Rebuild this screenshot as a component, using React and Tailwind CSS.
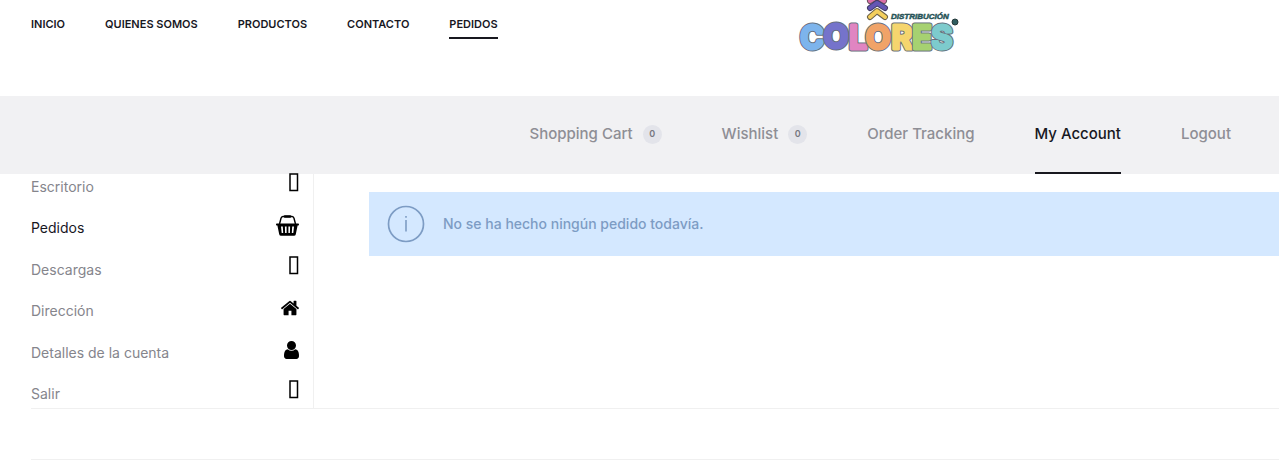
import React from "react";

const mainLinks = ["Inicio", "Quienes somos", "Productos", "Contacto", "Pedidos"];

const accountTabs = [
    { label: "Shopping Cart", count: 0 },
    { label: "Wishlist", count: 0 },
    { label: "Order Tracking" },
    { label: "My Account" },
    { label: "Logout" },
];

const logoLetters = [
    { char: "C", x: 14, y: 49, color: "#7db4ec" },
    { char: "O", x: 38, y: 48, color: "#7573cb" },
    { char: "L", x: 60, y: 49, color: "#e085c2" },
    { char: "O", x: 80, y: 49, color: "#f0a368" },
    { char: "R", x: 104, y: 49, color: "#f5d56e" },
    { char: "E", x: 124, y: 49, color: "#a6d171" },
    { char: "S", x: 144, y: 49, color: "#7dcbcd" },
];

const Logo = () => (
    <svg width="164" height="64" viewBox="0 0 164 64" role="img" aria-label="Distribución Colores">
        <g fill="none" strokeLinecap="round" strokeLinejoin="round">
            <path d="M72 1l7-4 7 4" stroke="#6b5261" strokeWidth="6" />
            <path d="M72 1l7-4 7 4" stroke="#dc6fa8" strokeWidth="4" />
            <path d="M72 8l7-5 8 5" stroke="#3f3a63" strokeWidth="6" />
            <path d="M72 8l7-5 8 5" stroke="#6456b4" strokeWidth="4" />
            <path d="M72 17l7-6 8 6" stroke="#6d6248" strokeWidth="6" />
            <path d="M72 17l7-6 8 6" stroke="#f4cf5c" strokeWidth="4" />
        </g>
        <text
            x="93"
            y="19"
            fill="#2f7376"
            stroke="#1f4448"
            strokeWidth="0.5"
            className="font-['Liberation_Sans',sans-serif] text-[8px] font-bold italic"
        >
            DISTRIBUCIÓN
        </text>
        <circle cx="157" cy="22" r="3" fill="#2f5d60" stroke="#26393b" />
        <g textAnchor="middle" strokeLinejoin="round" className="font-['Inter',sans-serif] text-[32px] font-bold">
            {logoLetters.map((l) => (
                <g key={l.x}>
                    <text x={l.x} y={l.y} fill="#66707c" stroke="#66707c" strokeWidth="5">{l.char}</text>
                    <text x={l.x} y={l.y} fill={l.color} stroke={l.color} strokeWidth="3">{l.char}</text>
                </g>
            ))}
        </g>
    </svg>
);

// glyph box, sits a little above the middle of its row
const BoxIcon = () => (
    <svg width="10" height="22" viewBox="0 0 10 22" aria-hidden="true">
        <path d="M1 1h7.500v16.500H1z" fill="none" stroke="#000" strokeWidth="1.500" />
    </svg>
);

const BasketIcon = () => (
    <svg width="23" height="21" viewBox="0 0 23 21" aria-hidden="true">
        <path d="M3.500 9L5 3.200Q5.400 1.700 7 1.500H16Q17.600 1.700 18 3.200L19.500 9" fill="none" stroke="#000" strokeWidth="1.400" />
        <path d="M9 1.500h5" stroke="#000" strokeWidth="2.600" strokeLinecap="round" />
        <path
            fillRule="evenodd"
            d="M.8 8.600h21.400q.8 0 .8.8v.4q0 .8-.8.8h-.6l-1.800 8.600q-.3 1.600-1.900 1.600H5.100q-1.600 0-1.900-1.600L1.400 10.600H.8q-.8 0-.8-.8v-.4q0-.8.8-.8zM5 11.500l.7 6.500h1.500l-.4-6.500zM8.900 11.500l.2 6.500h1.500v-6.500zM12.400 11.500v6.500h1.500l.2-6.500zM16.200 11.500l-.4 6.500h1.500l.7-6.500z"
        />
    </svg>
);

const HomeIcon = () => (
    <svg width="18" height="16" viewBox="89 245 1614 1300" aria-hidden="true">
        <path d="M1472 992v480q0 26-19 45t-45 19h-384v-384h-256v384h-384q-26 0-45-19t-19-45v-480q0-1 .5-3t.5-3l575-474 575 474q1 2 1 6zm223-69l-62 74q-8 9-21 11h-3q-13 0-21-7l-692-577-692 577q-12 8-24 7-13-2-21-11l-62-74q-8-10-7-23.500t11-21.500l719-599q32-26 76-26t76 26l244 204v-195q0-14 9-23t23-9h192q14 0 23 9t9 23v408l219 182q10 8 11 21.500t-7 23.500z" />
    </svg>
);

const UserIcon = () => (
    <svg width="15" height="18" viewBox="256 128 1280 1536" aria-hidden="true">
        <path d="M1536 1399q0 109-62.500 187t-150.500 78h-854q-88 0-150.500-78t-62.500-187q0-85 8.500-160.500t31.500-152 58.500-131 94-89 134.500-34.500q131 128 313 128t313-128q76 0 134.500 34.500t94 89 58.500 131 31.500 152 8.500 160.500zm-256-887q0 159-112.500 271.500t-271.500 112.500-271.500-112.500-112.500-271.500 112.500-271.500 271.500-112.500 271.500 112.500 112.500 271.500z" />
    </svg>
);

const sideLinks = [
    { label: "Escritorio", Icon: BoxIcon },
    { label: "Pedidos", Icon: BasketIcon },
    { label: "Descargas", Icon: BoxIcon },
    { label: "Dirección", Icon: HomeIcon },
    { label: "Detalles de la cuenta", Icon: UserIcon },
    { label: "Salir", Icon: BoxIcon },
];

const App = () => {
    return (
        <div className="bg-white font-['Inter',sans-serif] text-[#18181f]">
            <header className="flex h-24 items-start pl-[31px]">
                <nav className="flex w-3/5 gap-10 pt-4">
                    {mainLinks.map((label) => (
                        <a
                            key={label}
                            href="#"
                            className={`border-b-2 pb-[5px] text-[11px] leading-4 font-semibold whitespace-nowrap uppercase ${
                                label === "Pedidos" ? "border-[#18181f]" : "border-transparent"
                            }`}
                        >
                            {label}
                        </a>
                    ))}
                </nav>
                <a href="#" className="ml-[18px]">
                    <Logo />
                </a>
            </header>

            <nav className="flex h-[78px] justify-end gap-[60px] bg-[#f1f1f3] pr-12">
                {accountTabs.map((tab) => (
                    <a
                        key={tab.label}
                        href="#"
                        className={`flex items-center border-b-2 text-[15px] font-medium whitespace-nowrap ${
                            tab.label === "My Account"
                                ? "border-[#18181f] text-[#18181f]"
                                : "border-transparent text-[#8e8e95]"
                        }`}
                    >
                        {tab.label}
                        {tab.count !== undefined && (
                            <span className="ml-2.5 flex size-[19px] items-center justify-center rounded-full bg-[#e3e4ea] text-[9px] font-semibold text-[#77777f]">
                                {tab.count}
                            </span>
                        )}
                    </a>
                ))}
            </nav>

            <div className="ml-[31px]">
                <div className="flex border-b border-[#f0f0f0]">
                    <ul className="flex h-[234px] w-[283px] shrink-0 flex-col justify-between border-r border-[#f0f0f0] pt-px pr-3.5 pb-0.5">
                        {sideLinks.map(({ label, Icon }) => (
                            <li key={label}>
                                <a
                                    href="#"
                                    className={`flex h-6 items-center justify-between text-sm ${
                                        label === "Pedidos" ? "text-[#18181f]" : "text-[#85858c]"
                                    }`}
                                >
                                    {label}
                                    <span className="pb-1.5">
                                        <Icon />
                                    </span>
                                </a>
                            </li>
                        ))}
                    </ul>
                    <main className="flex-1 pt-[18px] pl-[55px]">
                        <div role="status" className="flex h-16 items-center gap-[18px] bg-[#d4e8ff] pl-[18px] text-[#7d9cc4]">
                            <svg width="38" height="38" viewBox="0 0 38 38" fill="none" stroke="currentColor" aria-hidden="true">
                                <circle cx="19" cy="19" r="17.500" strokeWidth="1.700" />
                                <path d="M19 15v11.500M19 11v1.800" strokeWidth="1.600" />
                            </svg>
                            <p className="text-sm font-medium">No se ha hecho ningún pedido todavía.</p>
                        </div>
                    </main>
                </div>
                <div className="h-[51px] border-b border-[#f0f0f0]" />
            </div>
        </div>
    );
};

export default App;
